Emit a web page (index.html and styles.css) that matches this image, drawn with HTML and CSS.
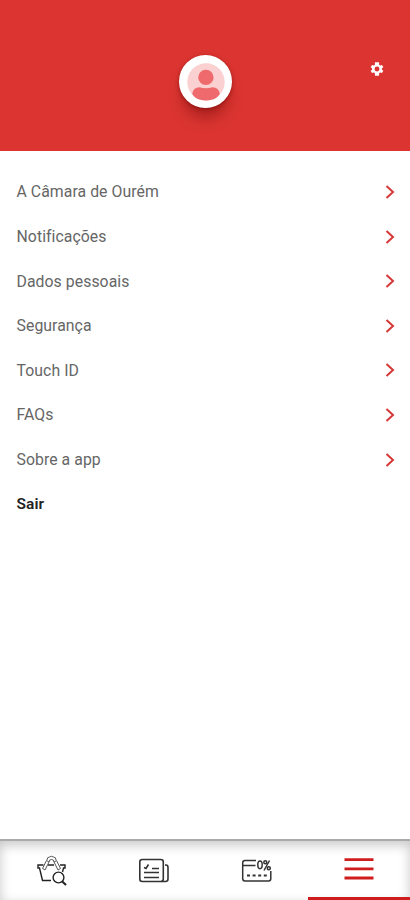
FILE: index.html
```html
<!DOCTYPE html>
<html lang="pt">
<head>
<meta charset="utf-8">
<title>Menu</title>
<link rel="stylesheet" href="styles.css">
</head>
<body>
<div class="app">
  <header class="header">
    <div class="avatar">
      <svg width="38" height="38" viewBox="0 0 38 38">
        <circle cx="19" cy="19" r="18.7" fill="#fbd0d0"/>
        <circle cx="18.900" cy="14.400" r="7.700" fill="#ef6a6d"/>
        <path d="M5.200 31Q6 24.500 12.500 24.200Q19 26.500 25.500 24.200Q32 24.500 32.800 31Q29 37.500 19 37.500T5.200 31Z" fill="#ef6a6d"/>
      </svg>
    </div>
    <svg class="gear" width="16" height="16" viewBox="0 0 24 24"><path fill="#fff" fill-rule="evenodd" d="M19.400 13a7.500 7.500 0 0 0 0-2l2.100-1.600-2-3.500-2.500 1a7.500 7.500 0 0 0-1.700-1L15 2H9l-.3 3.900a7.500 7.500 0 0 0-1.700 1l-2.500-1-2 3.500L4.600 11a7.500 7.500 0 0 0 0 2l-2.100 1.600 2 3.500 2.500-1a7.500 7.500 0 0 0 1.700 1L9 22h6l.3-3.900a7.500 7.500 0 0 0 1.700-1l2.500 1 2-3.500zM12 15.700a3.700 3.700 0 1 1 0-7.400 3.700 3.700 0 0 1 0 7.400z"/></svg>
  </header>
  <main class="menu">
    <div class="row"><span>A Câmara de Ourém</span><svg class="chevron" viewBox="0 0 10 16"><path d="M1.500 2 8 8 1.500 14"/></svg></div>
    <div class="row"><span>Notificações</span><svg class="chevron" viewBox="0 0 10 16"><path d="M1.500 2 8 8 1.500 14"/></svg></div>
    <div class="row"><span>Dados pessoais</span><svg class="chevron" viewBox="0 0 10 16"><path d="M1.500 2 8 8 1.500 14"/></svg></div>
    <div class="row"><span>Segurança</span><svg class="chevron" viewBox="0 0 10 16"><path d="M1.500 2 8 8 1.500 14"/></svg></div>
    <div class="row"><span>Touch ID</span><svg class="chevron" viewBox="0 0 10 16"><path d="M1.500 2 8 8 1.500 14"/></svg></div>
    <div class="row"><span>FAQs</span><svg class="chevron" viewBox="0 0 10 16"><path d="M1.500 2 8 8 1.500 14"/></svg></div>
    <div class="row"><span>Sobre a app</span><svg class="chevron" viewBox="0 0 10 16"><path d="M1.500 2 8 8 1.500 14"/></svg></div>
    <div class="row logout"><span>Sair</span></div>
  </main>
  <nav class="tabs">
    <div class="tab">
      <svg class="basket" width="32" height="32" viewBox="0 0 32 32" fill="none" stroke="#222" stroke-width="1.400">
        <path d="M12 10H18M7.500 10H2V13H3.500L6.500 25.500H15M24 10H29V13H27.500L26.500 17"/>
        <path d="M6.500 13.500 10.500 5.500 13 7 9 15ZM24.500 13.500 20.500 5.500 18 7 22 15ZM11 5Q11 2 13.500 2 15.500 .5 17.500 2 20 2 20 5M13 7Q13 4.500 15.500 4.500T18 7" stroke="#555" stroke-width="1"/>
        <circle cx="22.500" cy="22.500" r="5.400"/><path d="m26.300 26.500 3.700 3.500" stroke-width="2"/>
      </svg>
    </div>
    <div class="tab">
      <svg width="32" height="32" viewBox="0 0 32 32" fill="none" stroke="#333" stroke-width="1.600">
        <rect x="1.800" y="4.500" width="23.500" height="22" rx="2.500"/>
        <path d="M27 10H28Q30 10 30 12.500V24Q30 26.500 27.500 26.500H23M6 12.500 8 13.500 10.500 9.500M14 13.500H21M6 17.500H21M6 22.500H21"/>
      </svg>
    </div>
    <div class="tab">
      <svg class="card" width="32" height="32" viewBox="0 0 32 32" fill="none" stroke="#333" stroke-width="1.500">
        <path d="M15 5.500H4Q1.700 5.500 1.700 8V23.500Q1.700 26 4 26H27.500Q29.800 26 29.800 23.500V16M1.700 10.500H14.500"/>
        <path d="M6 20.500H26" stroke-width="2" stroke-dasharray="3 2.600"/>
        <ellipse cx="19" cy="9.800" rx="2.200" ry="3.900"/><path d="M28.500 5.500 23 15.500"/><circle cx="24.300" cy="7.200" r="1.500"/><circle cx="27.800" cy="13.300" r="1.500"/>
      </svg>
    </div>
    <div class="tab active">
      <svg width="32" height="32" viewBox="0 0 32 32" fill="none" stroke="#cf1c1c" stroke-width="2.800"><path d="M1.500 6.700H30.500M1.500 15.800H30.500M1.500 25H30.500"/></svg>
    </div>
  </nav>
</div>
</body>
</html>
```
FILE: styles.css
```css
* { box-sizing: border-box; }
body { margin: 0; background: #fff; font-family: Roboto, "Liberation Sans", sans-serif; }
.app { width: 410px; height: 900px; display: flex; flex-direction: column; }
.header {
  height: 151px;
  background: #dc3531;
  display: grid;
  grid-template-columns: 1fr 53px 1fr;
  padding: 55px 25px 0 26px;
}
.avatar {
  grid-column: 2;
  width: 53px;
  height: 53px;
  border-radius: 50%;
  background: #fff;
  display: flex;
  align-items: center;
  justify-content: center;
  box-shadow: 0 14px 15px -4px rgba(90, 0, 0, .38), 0 1px 4px rgba(110, 0, 0, .5);
}
.gear { justify-self: end; margin-top: 6px; }
.menu { flex: 1; padding: 18.700px 15.500px 0 16.500px; }
.row {
  height: 44.600px;
  display: flex;
  align-items: center;
  justify-content: space-between;
  font-size: 15.800px;
  letter-spacing: .06px;
  color: #666;
}
.logout { font-weight: 600; font-size: 15.500px; color: #222; }
.chevron { width: 10px; height: 16px; fill: none; stroke: #d63838; stroke-width: 2; }
.tabs {
  height: 61px;
  display: grid;
  grid-template-columns: repeat(4, 1fr);
  border-top: 2px solid #aaa;
  background: #fff;
  box-shadow: inset 0 4px 12px rgba(0, 0, 0, .22);
}
.tab { display: flex; align-items: center; justify-content: center; }
.basket, .card { margin-left: 1px; }
.active { border-bottom: 3px solid #cf1c1c; }
```
